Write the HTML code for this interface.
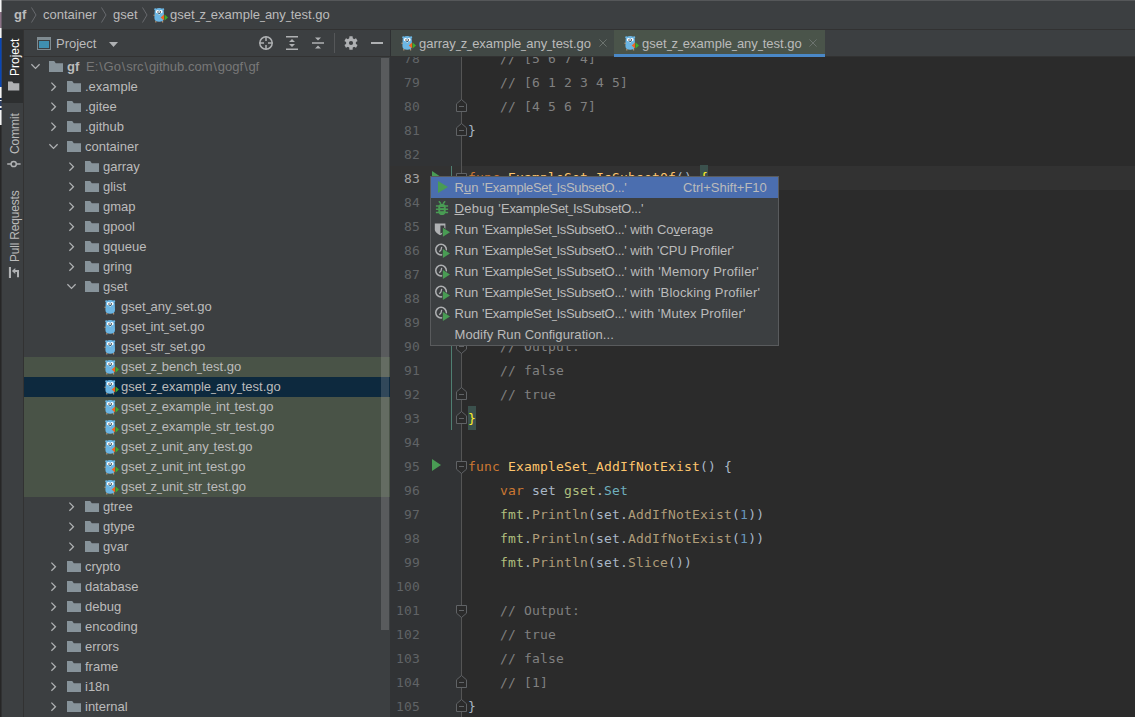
<!DOCTYPE html><html><head><meta charset="utf-8"><title>gf - gset_z_example_any_test.go</title><style>
*{box-sizing:border-box;margin:0;padding:0}
html,body{width:1135px;height:717px;overflow:hidden;background:#3c3f41}
body{position:relative;font-family:"Liberation Sans", sans-serif;font-size:12px;color:#bbbbbb;}
.abs{position:absolute}
.t{position:absolute;white-space:pre;line-height:20px;height:20px}
#edge{left:0;top:0;width:2px;height:717px;background:#3c3f41}
#topbar{left:2px;top:0;width:1133px;height:30px;background:#3c3f41;border-bottom:1px solid #323232}
#topline{left:2px;top:0;width:1133px;height:1px;background:#555759}
#stripe{left:2px;top:30px;width:22px;height:687px;background:#3c3f41;border-right:1px solid #323232}
#stripe .sel{left:0;top:0;width:21px;height:73px;background:#2d2f30}
.vt{position:absolute;white-space:pre;transform-origin:0 0;transform:rotate(-90deg);line-height:14px;height:14px;font-size:12px}
#proj{left:24px;top:30px;width:366px;height:687px;background:#3c3f41}
#projhead{left:0;top:0;width:366px;height:27px;border-bottom:1px solid #323232}
.row{position:absolute;left:0;width:366px;height:20px}
.row.g{background:#495347}
.row.s{background:#0d293e}
.row .t{top:0}
#sb{left:357px;top:28px;width:8px;height:572px;background:rgba(255,255,255,0.15)}
#tabs{left:390px;top:30px;width:745px;height:27px;background:#3c3f41;border-bottom:1px solid #323232;border-left:1px solid #2e3032}
.tab{position:absolute;top:0;height:26px;background:#414845}
.tab.act{background:#4a544a}
.tab.act:after{content:"";position:absolute;left:0;right:0;top:24px;height:3px;background:#4a88c7}
#ed{left:0;top:57px;width:1135px;height:660px;overflow:hidden}
#edin{left:0;top:-57px;width:1135px;height:717px}
#gutter{left:390px;top:57px;width:71px;height:660px;background:#313335}
#code{left:461px;top:57px;width:674px;height:660px;background:#2b2b2b}
.caret{position:absolute;left:390px;top:166px;width:745px;height:24px;background:#323232}
.ln{position:absolute;left:390px;width:30px;text-align:right;font-family:"DejaVu Sans Mono", "Liberation Mono", monospace;font-size:13px;letter-spacing:.174px;margin-top:1px;line-height:24px;height:24px;color:#606366;white-space:pre}
.cl{position:absolute;left:468px;font-family:"DejaVu Sans Mono", "Liberation Mono", monospace;font-size:13px;letter-spacing:.174px;margin-top:1px;line-height:24px;height:24px;color:#a9b7c6;white-space:pre}
.br{display:inline-block;height:24px;margin-top:-1px;vertical-align:top;line-height:26px;background:#3b514d;color:#ffef28}
.k{color:#cc7832}.f{color:#ffc66d}.c{color:#808080}.n{color:#6897bb}.p{color:#afbf7e}.m{color:#b09d79}.ty{color:#6fafbd}
#popup{left:430px;top:176px;width:349px;height:170px;background:#3c3f41;border:1px solid #595b5d}
.mi{position:absolute;left:0;width:347px;height:21px}
.mi.s{background:#4b6eaf}
.mi .t{top:0;line-height:21px;height:21px;left:23.5px}

.us{display:inline-block;width:4.9px;transform:scaleX(.68);transform-origin:0 50%}
.bs{display:inline-block;width:5.3px;text-align:center}
u{text-decoration:underline;text-underline-offset:1px}
</style></head><body>
<div id="edge" class="abs">
<div class="abs" style="left:0;top:0px;width:1px;height:12px;background:#f4f4f4"></div>
<div class="abs" style="left:1px;top:0px;width:1px;height:12px;background:#f4f4f4;opacity:.55"></div>
<div class="abs" style="left:0;top:12px;width:1px;height:16px;background:#8a7286"></div>
<div class="abs" style="left:1px;top:12px;width:1px;height:16px;background:#8a7286;opacity:.55"></div>
<div class="abs" style="left:0;top:28px;width:1px;height:10px;background:#f4f4f4"></div>
<div class="abs" style="left:1px;top:28px;width:1px;height:10px;background:#f4f4f4;opacity:.55"></div>
<div class="abs" style="left:0;top:38px;width:1px;height:49px;background:#0846b6"></div>
<div class="abs" style="left:1px;top:38px;width:1px;height:49px;background:#0846b6;opacity:.55"></div>
<div class="abs" style="left:0;top:87px;width:1px;height:11px;background:#f4f4f4"></div>
<div class="abs" style="left:1px;top:87px;width:1px;height:11px;background:#f4f4f4;opacity:.55"></div>
<div class="abs" style="left:0;top:98px;width:1px;height:2px;background:#1c2f55"></div>
<div class="abs" style="left:1px;top:98px;width:1px;height:2px;background:#1c2f55;opacity:.55"></div>
<div class="abs" style="left:0;top:100px;width:1px;height:1px;background:#f4f4f4"></div>
<div class="abs" style="left:1px;top:100px;width:1px;height:1px;background:#f4f4f4;opacity:.55"></div>
<div class="abs" style="left:0;top:101px;width:1px;height:5px;background:#2c3e63"></div>
<div class="abs" style="left:1px;top:101px;width:1px;height:5px;background:#2c3e63;opacity:.55"></div>
<div class="abs" style="left:0;top:106px;width:1px;height:2px;background:#f4f4f4"></div>
<div class="abs" style="left:1px;top:106px;width:1px;height:2px;background:#f4f4f4;opacity:.55"></div>
<div class="abs" style="left:0;top:108px;width:1px;height:2px;background:#1c2f55"></div>
<div class="abs" style="left:1px;top:108px;width:1px;height:2px;background:#1c2f55;opacity:.55"></div>
<div class="abs" style="left:0;top:110px;width:1px;height:15px;background:#f4f4f4"></div>
<div class="abs" style="left:1px;top:110px;width:1px;height:15px;background:#f4f4f4;opacity:.55"></div>
<div class="abs" style="left:0;top:125px;width:1px;height:592px;background:#262626"></div>
<div class="abs" style="left:1px;top:125px;width:1px;height:592px;background:#262626;opacity:.55"></div>
</div>
<div id="topbar" class="abs"></div><div id="topline" class="abs"></div>
<div class="t" style="left:14px;top:5px;font-weight:bold;font-size:13px">gf</div>
<svg class="abs" style="left:31px;top:7px" width="7" height="16" viewBox="0 0 7 16"><path d="M0.5 0.5 L5 8 L0.5 15.5" fill="none" stroke="#676a6d" stroke-width="1"/></svg>
<div class="t" style="left:43px;top:5px;font-size:13px">container</div>
<svg class="abs" style="left:101px;top:7px" width="7" height="16" viewBox="0 0 7 16"><path d="M0.5 0.5 L5 8 L0.5 15.5" fill="none" stroke="#676a6d" stroke-width="1"/></svg>
<div class="t" style="left:113px;top:5px;font-size:13px">gset</div>
<svg class="abs" style="left:141.5px;top:7px" width="7" height="16" viewBox="0 0 7 16"><path d="M0.5 0.5 L5 8 L0.5 15.5" fill="none" stroke="#676a6d" stroke-width="1"/></svg>
<div class="t" style="left:170px;top:5px;font-size:13px">gset<span class="us">_</span>z<span class="us">_</span>example<span class="us">_</span>any<span class="us">_</span>test.go</div>
<svg class="abs" style="left:153px;top:7px" width="16" height="16" viewBox="0 0 16 16"><circle cx="2.3" cy="2.3" r="1.15" fill="#6cb6e3"/><circle cx="10.1" cy="2.3" r="1.15" fill="#6cb6e3"/><path d="M1.6 5 C1.6 2 3.5 1 6.2 1 C8.9 1 10.8 2 10.8 5 L11 11 C11 13.8 9 14.8 6.2 14.8 C3.4 14.8 1.4 13.8 1.4 11 Z" fill="#6cb6e3"/><circle cx="4.5" cy="4.7" r="1.65" fill="#fff"/><circle cx="7.9" cy="4.7" r="1.65" fill="#fff"/><circle cx="5" cy="5" r="0.7" fill="#222"/><circle cx="7.4" cy="5" r="0.7" fill="#222"/><ellipse cx="6.2" cy="6.5" rx="0.9" ry="0.55" fill="#3a3a3a"/><rect x="5.7" y="6.9" width="1" height="0.9" fill="#f2ecdc"/><rect x="2.2" y="14.2" width="1.2" height="1.2" fill="#c9a27a"/><rect x="9" y="14.2" width="1.2" height="1.2" fill="#c9a27a"/><rect x="0.6" y="7.6" width="1" height="1.4" fill="#c9a27a"/><path d="M11.1 7.5 L11.1 13.4 L7.7 10.45 Z" fill="#f26522"/><path d="M11.6 7.5 L11.6 13.4 L15 10.45 Z" fill="#3fae2a"/></svg>
<div id="stripe" class="abs"><div class="sel abs"></div>
<div class="vt" style="left:6px;top:46px;color:#ffffff">Project</div>
<svg class="abs" style="left:6px;top:51px" width="12" height="10" viewBox="0 0 12 10"><path d="M0 0.5 H4.2 L5.6 2.3 H11.3 V9.5 H0 Z" fill="#afb1b3"/></svg>
<div class="vt" style="left:6px;top:124px;letter-spacing:-0.1px">Commit</div>
<svg class="abs" style="left:4px;top:129px" width="16" height="10" viewBox="0 0 16 10"><circle cx="7.7" cy="5" r="2.6" fill="none" stroke="#afb1b3" stroke-width="1.5"/><path d="M1.2 5 H5 M10.4 5 H14.6" stroke="#afb1b3" stroke-width="1.5"/></svg>
<div class="vt" style="left:6px;top:232px;letter-spacing:-0.2px">Pull Requests</div>
<svg class="abs" style="left:6px;top:236px" width="13" height="13" viewBox="0 0 13 13"><rect x="0.9" y="1" width="2.1" height="11" fill="#afb1b3"/><path d="M10 11.2 V5 H6" fill="none" stroke="#afb1b3" stroke-width="2"/><path d="M7.3 2 L3.9 5 L7.3 8 Z" fill="#afb1b3"/></svg>
</div>
<div id="proj" class="abs"><div id="projhead" class="abs">
<svg class="abs" style="left:13px;top:7px" width="14" height="14" viewBox="0 0 14 14"><rect x="0.5" y="0.5" width="13" height="12" fill="#3c3f41" stroke="#7f8b91"/><rect x="0" y="0" width="14" height="3" fill="#7f8b91"/><rect x="2" y="4" width="10" height="7" fill="#3f8fb0"/></svg>
<div class="t" style="left:32px;top:4px;font-size:13px">Project</div>
<svg class="abs" style="left:85px;top:12px" width="9" height="5" viewBox="0 0 9 5"><path d="M0 0 H9 L4.5 5 Z" fill="#afb1b3"/></svg>
<svg class="abs" style="left:234px;top:5px" width="16" height="16" viewBox="0 0 16 16"><circle cx="8" cy="8" r="6.2" fill="none" stroke="#afb1b3" stroke-width="1.5"/><path d="M8 1.5 V6 M8 10 V14.5 M1.5 8 H6 M10 8 H14.5" stroke="#afb1b3" stroke-width="1.5"/></svg>
<svg class="abs" style="left:260px;top:5px" width="16" height="16" viewBox="0 0 16 16"><path d="M2 1 H14 V2.6 H2 Z M2 13.4 H14 V15 H2 Z M8 4 L11 7 H5 Z M8 12 L11 9 H5 Z" fill="#afb1b3"/></svg>
<svg class="abs" style="left:286px;top:5px" width="16" height="16" viewBox="0 0 16 16"><path d="M2 7.2 H14 V8.8 H2 Z M8 5.6 L11 2.6 H5 Z M8 10.4 L11 13.4 H5 Z" fill="#afb1b3"/></svg>
<div class="abs" style="left:310px;top:3px;width:1px;height:20px;background:#555759"></div>
<svg class="abs" style="left:319px;top:5px" width="16" height="16" viewBox="0 0 16 16"><g fill="#afb1b3"><circle cx="8" cy="8" r="4.9"/><rect x="6.3" y="1.3" width="3.4" height="3.4" rx="0.5" transform="rotate(0 8 8)"/><rect x="6.3" y="1.3" width="3.4" height="3.4" rx="0.5" transform="rotate(60 8 8)"/><rect x="6.3" y="1.3" width="3.4" height="3.4" rx="0.5" transform="rotate(120 8 8)"/><rect x="6.3" y="1.3" width="3.4" height="3.4" rx="0.5" transform="rotate(180 8 8)"/><rect x="6.3" y="1.3" width="3.4" height="3.4" rx="0.5" transform="rotate(240 8 8)"/><rect x="6.3" y="1.3" width="3.4" height="3.4" rx="0.5" transform="rotate(300 8 8)"/></g><circle cx="8" cy="8" r="2.1" fill="#3c3f41"/></svg>
<div class="abs" style="left:347px;top:12px;width:12px;height:2px;background:#afb1b3"></div>
</div>
<div class="row " style="top:27px">
<svg class="abs" style="left:6px;top:4px" width="11" height="11" viewBox="0 0 11 11"><path d="M1.4 3.2 L5.5 7.4 L9.6 3.2" fill="none" stroke="#afb1b3" stroke-width="1.25"/></svg>
<svg class="abs" style="left:24px;top:3px" width="16" height="14" viewBox="0 0 16 14"><path d="M1 1 H6.2 L7.8 3.2 H15 V12 H1 Z" fill="#87939a"/></svg>
<div class="t" style="left:43px;font-weight:bold;font-size:13px">gf</div><div class="t" style="left:62px;color:#787878;font-size:13px">E:<span class="bs">\</span>Go<span class="bs">\</span>src<span class="bs">\</span>github.com<span class="bs">\</span>gogf<span class="bs">\</span>gf</div>
</div>
<div class="row " style="top:47px">
<svg class="abs" style="left:24px;top:4px" width="11" height="11" viewBox="0 0 11 11"><path d="M3.4 1.6 L7.5 5.7 L3.4 9.8" fill="none" stroke="#afb1b3" stroke-width="1.25"/></svg>
<svg class="abs" style="left:42px;top:3px" width="16" height="14" viewBox="0 0 16 14"><path d="M1 1 H6.2 L7.8 3.2 H15 V12 H1 Z" fill="#87939a"/></svg>
<div class="t" style="left:61px;font-size:13px">.example</div>
</div>
<div class="row " style="top:67px">
<svg class="abs" style="left:24px;top:4px" width="11" height="11" viewBox="0 0 11 11"><path d="M3.4 1.6 L7.5 5.7 L3.4 9.8" fill="none" stroke="#afb1b3" stroke-width="1.25"/></svg>
<svg class="abs" style="left:42px;top:3px" width="16" height="14" viewBox="0 0 16 14"><path d="M1 1 H6.2 L7.8 3.2 H15 V12 H1 Z" fill="#87939a"/></svg>
<div class="t" style="left:61px;font-size:13px">.gitee</div>
</div>
<div class="row " style="top:87px">
<svg class="abs" style="left:24px;top:4px" width="11" height="11" viewBox="0 0 11 11"><path d="M3.4 1.6 L7.5 5.7 L3.4 9.8" fill="none" stroke="#afb1b3" stroke-width="1.25"/></svg>
<svg class="abs" style="left:42px;top:3px" width="16" height="14" viewBox="0 0 16 14"><path d="M1 1 H6.2 L7.8 3.2 H15 V12 H1 Z" fill="#87939a"/></svg>
<div class="t" style="left:61px;font-size:13px">.github</div>
</div>
<div class="row " style="top:107px">
<svg class="abs" style="left:24px;top:4px" width="11" height="11" viewBox="0 0 11 11"><path d="M1.4 3.2 L5.5 7.4 L9.6 3.2" fill="none" stroke="#afb1b3" stroke-width="1.25"/></svg>
<svg class="abs" style="left:42px;top:3px" width="16" height="14" viewBox="0 0 16 14"><path d="M1 1 H6.2 L7.8 3.2 H15 V12 H1 Z" fill="#87939a"/></svg>
<div class="t" style="left:61px;font-size:13px">container</div>
</div>
<div class="row " style="top:127px">
<svg class="abs" style="left:42px;top:4px" width="11" height="11" viewBox="0 0 11 11"><path d="M3.4 1.6 L7.5 5.7 L3.4 9.8" fill="none" stroke="#afb1b3" stroke-width="1.25"/></svg>
<svg class="abs" style="left:60px;top:3px" width="16" height="14" viewBox="0 0 16 14"><path d="M1 1 H6.2 L7.8 3.2 H15 V12 H1 Z" fill="#87939a"/></svg>
<div class="t" style="left:79px;font-size:13px">garray</div>
</div>
<div class="row " style="top:147px">
<svg class="abs" style="left:42px;top:4px" width="11" height="11" viewBox="0 0 11 11"><path d="M3.4 1.6 L7.5 5.7 L3.4 9.8" fill="none" stroke="#afb1b3" stroke-width="1.25"/></svg>
<svg class="abs" style="left:60px;top:3px" width="16" height="14" viewBox="0 0 16 14"><path d="M1 1 H6.2 L7.8 3.2 H15 V12 H1 Z" fill="#87939a"/></svg>
<div class="t" style="left:79px;font-size:13px">glist</div>
</div>
<div class="row " style="top:167px">
<svg class="abs" style="left:42px;top:4px" width="11" height="11" viewBox="0 0 11 11"><path d="M3.4 1.6 L7.5 5.7 L3.4 9.8" fill="none" stroke="#afb1b3" stroke-width="1.25"/></svg>
<svg class="abs" style="left:60px;top:3px" width="16" height="14" viewBox="0 0 16 14"><path d="M1 1 H6.2 L7.8 3.2 H15 V12 H1 Z" fill="#87939a"/></svg>
<div class="t" style="left:79px;font-size:13px">gmap</div>
</div>
<div class="row " style="top:187px">
<svg class="abs" style="left:42px;top:4px" width="11" height="11" viewBox="0 0 11 11"><path d="M3.4 1.6 L7.5 5.7 L3.4 9.8" fill="none" stroke="#afb1b3" stroke-width="1.25"/></svg>
<svg class="abs" style="left:60px;top:3px" width="16" height="14" viewBox="0 0 16 14"><path d="M1 1 H6.2 L7.8 3.2 H15 V12 H1 Z" fill="#87939a"/></svg>
<div class="t" style="left:79px;font-size:13px">gpool</div>
</div>
<div class="row " style="top:207px">
<svg class="abs" style="left:42px;top:4px" width="11" height="11" viewBox="0 0 11 11"><path d="M3.4 1.6 L7.5 5.7 L3.4 9.8" fill="none" stroke="#afb1b3" stroke-width="1.25"/></svg>
<svg class="abs" style="left:60px;top:3px" width="16" height="14" viewBox="0 0 16 14"><path d="M1 1 H6.2 L7.8 3.2 H15 V12 H1 Z" fill="#87939a"/></svg>
<div class="t" style="left:79px;font-size:13px">gqueue</div>
</div>
<div class="row " style="top:227px">
<svg class="abs" style="left:42px;top:4px" width="11" height="11" viewBox="0 0 11 11"><path d="M3.4 1.6 L7.5 5.7 L3.4 9.8" fill="none" stroke="#afb1b3" stroke-width="1.25"/></svg>
<svg class="abs" style="left:60px;top:3px" width="16" height="14" viewBox="0 0 16 14"><path d="M1 1 H6.2 L7.8 3.2 H15 V12 H1 Z" fill="#87939a"/></svg>
<div class="t" style="left:79px;font-size:13px">gring</div>
</div>
<div class="row " style="top:247px">
<svg class="abs" style="left:42px;top:4px" width="11" height="11" viewBox="0 0 11 11"><path d="M1.4 3.2 L5.5 7.4 L9.6 3.2" fill="none" stroke="#afb1b3" stroke-width="1.25"/></svg>
<svg class="abs" style="left:60px;top:3px" width="16" height="14" viewBox="0 0 16 14"><path d="M1 1 H6.2 L7.8 3.2 H15 V12 H1 Z" fill="#87939a"/></svg>
<div class="t" style="left:79px;font-size:13px">gset</div>
</div>
<div class="row " style="top:267px">
<svg class="abs" style="left:80px;top:2px" width="16" height="16" viewBox="0 0 16 16"><circle cx="2.3" cy="2.3" r="1.15" fill="#6cb6e3"/><circle cx="10.1" cy="2.3" r="1.15" fill="#6cb6e3"/><path d="M1.6 5 C1.6 2 3.5 1 6.2 1 C8.9 1 10.8 2 10.8 5 L11 11 C11 13.8 9 14.8 6.2 14.8 C3.4 14.8 1.4 13.8 1.4 11 Z" fill="#6cb6e3"/><circle cx="4.5" cy="4.7" r="1.65" fill="#fff"/><circle cx="7.9" cy="4.7" r="1.65" fill="#fff"/><circle cx="5" cy="5" r="0.7" fill="#222"/><circle cx="7.4" cy="5" r="0.7" fill="#222"/><ellipse cx="6.2" cy="6.5" rx="0.9" ry="0.55" fill="#3a3a3a"/><rect x="5.7" y="6.9" width="1" height="0.9" fill="#f2ecdc"/><rect x="2.2" y="14.2" width="1.2" height="1.2" fill="#c9a27a"/><rect x="9" y="14.2" width="1.2" height="1.2" fill="#c9a27a"/><rect x="0.6" y="7.6" width="1" height="1.4" fill="#c9a27a"/></svg>
<div class="t" style="left:97px;font-size:13px">gset<span class="us">_</span>any<span class="us">_</span>set.go</div>
</div>
<div class="row " style="top:287px">
<svg class="abs" style="left:80px;top:2px" width="16" height="16" viewBox="0 0 16 16"><circle cx="2.3" cy="2.3" r="1.15" fill="#6cb6e3"/><circle cx="10.1" cy="2.3" r="1.15" fill="#6cb6e3"/><path d="M1.6 5 C1.6 2 3.5 1 6.2 1 C8.9 1 10.8 2 10.8 5 L11 11 C11 13.8 9 14.8 6.2 14.8 C3.4 14.8 1.4 13.8 1.4 11 Z" fill="#6cb6e3"/><circle cx="4.5" cy="4.7" r="1.65" fill="#fff"/><circle cx="7.9" cy="4.7" r="1.65" fill="#fff"/><circle cx="5" cy="5" r="0.7" fill="#222"/><circle cx="7.4" cy="5" r="0.7" fill="#222"/><ellipse cx="6.2" cy="6.5" rx="0.9" ry="0.55" fill="#3a3a3a"/><rect x="5.7" y="6.9" width="1" height="0.9" fill="#f2ecdc"/><rect x="2.2" y="14.2" width="1.2" height="1.2" fill="#c9a27a"/><rect x="9" y="14.2" width="1.2" height="1.2" fill="#c9a27a"/><rect x="0.6" y="7.6" width="1" height="1.4" fill="#c9a27a"/></svg>
<div class="t" style="left:97px;font-size:13px">gset<span class="us">_</span>int<span class="us">_</span>set.go</div>
</div>
<div class="row " style="top:307px">
<svg class="abs" style="left:80px;top:2px" width="16" height="16" viewBox="0 0 16 16"><circle cx="2.3" cy="2.3" r="1.15" fill="#6cb6e3"/><circle cx="10.1" cy="2.3" r="1.15" fill="#6cb6e3"/><path d="M1.6 5 C1.6 2 3.5 1 6.2 1 C8.9 1 10.8 2 10.8 5 L11 11 C11 13.8 9 14.8 6.2 14.8 C3.4 14.8 1.4 13.8 1.4 11 Z" fill="#6cb6e3"/><circle cx="4.5" cy="4.7" r="1.65" fill="#fff"/><circle cx="7.9" cy="4.7" r="1.65" fill="#fff"/><circle cx="5" cy="5" r="0.7" fill="#222"/><circle cx="7.4" cy="5" r="0.7" fill="#222"/><ellipse cx="6.2" cy="6.5" rx="0.9" ry="0.55" fill="#3a3a3a"/><rect x="5.7" y="6.9" width="1" height="0.9" fill="#f2ecdc"/><rect x="2.2" y="14.2" width="1.2" height="1.2" fill="#c9a27a"/><rect x="9" y="14.2" width="1.2" height="1.2" fill="#c9a27a"/><rect x="0.6" y="7.6" width="1" height="1.4" fill="#c9a27a"/></svg>
<div class="t" style="left:97px;font-size:13px">gset<span class="us">_</span>str<span class="us">_</span>set.go</div>
</div>
<div class="row g" style="top:327px">
<svg class="abs" style="left:80px;top:2px" width="16" height="16" viewBox="0 0 16 16"><circle cx="2.3" cy="2.3" r="1.15" fill="#6cb6e3"/><circle cx="10.1" cy="2.3" r="1.15" fill="#6cb6e3"/><path d="M1.6 5 C1.6 2 3.5 1 6.2 1 C8.9 1 10.8 2 10.8 5 L11 11 C11 13.8 9 14.8 6.2 14.8 C3.4 14.8 1.4 13.8 1.4 11 Z" fill="#6cb6e3"/><circle cx="4.5" cy="4.7" r="1.65" fill="#fff"/><circle cx="7.9" cy="4.7" r="1.65" fill="#fff"/><circle cx="5" cy="5" r="0.7" fill="#222"/><circle cx="7.4" cy="5" r="0.7" fill="#222"/><ellipse cx="6.2" cy="6.5" rx="0.9" ry="0.55" fill="#3a3a3a"/><rect x="5.7" y="6.9" width="1" height="0.9" fill="#f2ecdc"/><rect x="2.2" y="14.2" width="1.2" height="1.2" fill="#c9a27a"/><rect x="9" y="14.2" width="1.2" height="1.2" fill="#c9a27a"/><rect x="0.6" y="7.6" width="1" height="1.4" fill="#c9a27a"/><path d="M11.1 7.5 L11.1 13.4 L7.7 10.45 Z" fill="#f26522"/><path d="M11.6 7.5 L11.6 13.4 L15 10.45 Z" fill="#3fae2a"/></svg>
<div class="t" style="left:97px;font-size:13px">gset<span class="us">_</span>z<span class="us">_</span>bench<span class="us">_</span>test.go</div>
</div>
<div class="row s" style="top:347px">
<svg class="abs" style="left:80px;top:2px" width="16" height="16" viewBox="0 0 16 16"><circle cx="2.3" cy="2.3" r="1.15" fill="#6cb6e3"/><circle cx="10.1" cy="2.3" r="1.15" fill="#6cb6e3"/><path d="M1.6 5 C1.6 2 3.5 1 6.2 1 C8.9 1 10.8 2 10.8 5 L11 11 C11 13.8 9 14.8 6.2 14.8 C3.4 14.8 1.4 13.8 1.4 11 Z" fill="#6cb6e3"/><circle cx="4.5" cy="4.7" r="1.65" fill="#fff"/><circle cx="7.9" cy="4.7" r="1.65" fill="#fff"/><circle cx="5" cy="5" r="0.7" fill="#222"/><circle cx="7.4" cy="5" r="0.7" fill="#222"/><ellipse cx="6.2" cy="6.5" rx="0.9" ry="0.55" fill="#3a3a3a"/><rect x="5.7" y="6.9" width="1" height="0.9" fill="#f2ecdc"/><rect x="2.2" y="14.2" width="1.2" height="1.2" fill="#c9a27a"/><rect x="9" y="14.2" width="1.2" height="1.2" fill="#c9a27a"/><rect x="0.6" y="7.6" width="1" height="1.4" fill="#c9a27a"/><path d="M11.1 7.5 L11.1 13.4 L7.7 10.45 Z" fill="#f26522"/><path d="M11.6 7.5 L11.6 13.4 L15 10.45 Z" fill="#3fae2a"/></svg>
<div class="t" style="left:97px;font-size:13px">gset<span class="us">_</span>z<span class="us">_</span>example<span class="us">_</span>any<span class="us">_</span>test.go</div>
</div>
<div class="row g" style="top:367px">
<svg class="abs" style="left:80px;top:2px" width="16" height="16" viewBox="0 0 16 16"><circle cx="2.3" cy="2.3" r="1.15" fill="#6cb6e3"/><circle cx="10.1" cy="2.3" r="1.15" fill="#6cb6e3"/><path d="M1.6 5 C1.6 2 3.5 1 6.2 1 C8.9 1 10.8 2 10.8 5 L11 11 C11 13.8 9 14.8 6.2 14.8 C3.4 14.8 1.4 13.8 1.4 11 Z" fill="#6cb6e3"/><circle cx="4.5" cy="4.7" r="1.65" fill="#fff"/><circle cx="7.9" cy="4.7" r="1.65" fill="#fff"/><circle cx="5" cy="5" r="0.7" fill="#222"/><circle cx="7.4" cy="5" r="0.7" fill="#222"/><ellipse cx="6.2" cy="6.5" rx="0.9" ry="0.55" fill="#3a3a3a"/><rect x="5.7" y="6.9" width="1" height="0.9" fill="#f2ecdc"/><rect x="2.2" y="14.2" width="1.2" height="1.2" fill="#c9a27a"/><rect x="9" y="14.2" width="1.2" height="1.2" fill="#c9a27a"/><rect x="0.6" y="7.6" width="1" height="1.4" fill="#c9a27a"/><path d="M11.1 7.5 L11.1 13.4 L7.7 10.45 Z" fill="#f26522"/><path d="M11.6 7.5 L11.6 13.4 L15 10.45 Z" fill="#3fae2a"/></svg>
<div class="t" style="left:97px;font-size:13px">gset<span class="us">_</span>z<span class="us">_</span>example<span class="us">_</span>int<span class="us">_</span>test.go</div>
</div>
<div class="row g" style="top:387px">
<svg class="abs" style="left:80px;top:2px" width="16" height="16" viewBox="0 0 16 16"><circle cx="2.3" cy="2.3" r="1.15" fill="#6cb6e3"/><circle cx="10.1" cy="2.3" r="1.15" fill="#6cb6e3"/><path d="M1.6 5 C1.6 2 3.5 1 6.2 1 C8.9 1 10.8 2 10.8 5 L11 11 C11 13.8 9 14.8 6.2 14.8 C3.4 14.8 1.4 13.8 1.4 11 Z" fill="#6cb6e3"/><circle cx="4.5" cy="4.7" r="1.65" fill="#fff"/><circle cx="7.9" cy="4.7" r="1.65" fill="#fff"/><circle cx="5" cy="5" r="0.7" fill="#222"/><circle cx="7.4" cy="5" r="0.7" fill="#222"/><ellipse cx="6.2" cy="6.5" rx="0.9" ry="0.55" fill="#3a3a3a"/><rect x="5.7" y="6.9" width="1" height="0.9" fill="#f2ecdc"/><rect x="2.2" y="14.2" width="1.2" height="1.2" fill="#c9a27a"/><rect x="9" y="14.2" width="1.2" height="1.2" fill="#c9a27a"/><rect x="0.6" y="7.6" width="1" height="1.4" fill="#c9a27a"/><path d="M11.1 7.5 L11.1 13.4 L7.7 10.45 Z" fill="#f26522"/><path d="M11.6 7.5 L11.6 13.4 L15 10.45 Z" fill="#3fae2a"/></svg>
<div class="t" style="left:97px;font-size:13px">gset<span class="us">_</span>z<span class="us">_</span>example<span class="us">_</span>str<span class="us">_</span>test.go</div>
</div>
<div class="row g" style="top:407px">
<svg class="abs" style="left:80px;top:2px" width="16" height="16" viewBox="0 0 16 16"><circle cx="2.3" cy="2.3" r="1.15" fill="#6cb6e3"/><circle cx="10.1" cy="2.3" r="1.15" fill="#6cb6e3"/><path d="M1.6 5 C1.6 2 3.5 1 6.2 1 C8.9 1 10.8 2 10.8 5 L11 11 C11 13.8 9 14.8 6.2 14.8 C3.4 14.8 1.4 13.8 1.4 11 Z" fill="#6cb6e3"/><circle cx="4.5" cy="4.7" r="1.65" fill="#fff"/><circle cx="7.9" cy="4.7" r="1.65" fill="#fff"/><circle cx="5" cy="5" r="0.7" fill="#222"/><circle cx="7.4" cy="5" r="0.7" fill="#222"/><ellipse cx="6.2" cy="6.5" rx="0.9" ry="0.55" fill="#3a3a3a"/><rect x="5.7" y="6.9" width="1" height="0.9" fill="#f2ecdc"/><rect x="2.2" y="14.2" width="1.2" height="1.2" fill="#c9a27a"/><rect x="9" y="14.2" width="1.2" height="1.2" fill="#c9a27a"/><rect x="0.6" y="7.6" width="1" height="1.4" fill="#c9a27a"/><path d="M11.1 7.5 L11.1 13.4 L7.7 10.45 Z" fill="#f26522"/><path d="M11.6 7.5 L11.6 13.4 L15 10.45 Z" fill="#3fae2a"/></svg>
<div class="t" style="left:97px;font-size:13px">gset<span class="us">_</span>z<span class="us">_</span>unit<span class="us">_</span>any<span class="us">_</span>test.go</div>
</div>
<div class="row g" style="top:427px">
<svg class="abs" style="left:80px;top:2px" width="16" height="16" viewBox="0 0 16 16"><circle cx="2.3" cy="2.3" r="1.15" fill="#6cb6e3"/><circle cx="10.1" cy="2.3" r="1.15" fill="#6cb6e3"/><path d="M1.6 5 C1.6 2 3.5 1 6.2 1 C8.9 1 10.8 2 10.8 5 L11 11 C11 13.8 9 14.8 6.2 14.8 C3.4 14.8 1.4 13.8 1.4 11 Z" fill="#6cb6e3"/><circle cx="4.5" cy="4.7" r="1.65" fill="#fff"/><circle cx="7.9" cy="4.7" r="1.65" fill="#fff"/><circle cx="5" cy="5" r="0.7" fill="#222"/><circle cx="7.4" cy="5" r="0.7" fill="#222"/><ellipse cx="6.2" cy="6.5" rx="0.9" ry="0.55" fill="#3a3a3a"/><rect x="5.7" y="6.9" width="1" height="0.9" fill="#f2ecdc"/><rect x="2.2" y="14.2" width="1.2" height="1.2" fill="#c9a27a"/><rect x="9" y="14.2" width="1.2" height="1.2" fill="#c9a27a"/><rect x="0.6" y="7.6" width="1" height="1.4" fill="#c9a27a"/><path d="M11.1 7.5 L11.1 13.4 L7.7 10.45 Z" fill="#f26522"/><path d="M11.6 7.5 L11.6 13.4 L15 10.45 Z" fill="#3fae2a"/></svg>
<div class="t" style="left:97px;font-size:13px">gset<span class="us">_</span>z<span class="us">_</span>unit<span class="us">_</span>int<span class="us">_</span>test.go</div>
</div>
<div class="row g" style="top:447px">
<svg class="abs" style="left:80px;top:2px" width="16" height="16" viewBox="0 0 16 16"><circle cx="2.3" cy="2.3" r="1.15" fill="#6cb6e3"/><circle cx="10.1" cy="2.3" r="1.15" fill="#6cb6e3"/><path d="M1.6 5 C1.6 2 3.5 1 6.2 1 C8.9 1 10.8 2 10.8 5 L11 11 C11 13.8 9 14.8 6.2 14.8 C3.4 14.8 1.4 13.8 1.4 11 Z" fill="#6cb6e3"/><circle cx="4.5" cy="4.7" r="1.65" fill="#fff"/><circle cx="7.9" cy="4.7" r="1.65" fill="#fff"/><circle cx="5" cy="5" r="0.7" fill="#222"/><circle cx="7.4" cy="5" r="0.7" fill="#222"/><ellipse cx="6.2" cy="6.5" rx="0.9" ry="0.55" fill="#3a3a3a"/><rect x="5.7" y="6.9" width="1" height="0.9" fill="#f2ecdc"/><rect x="2.2" y="14.2" width="1.2" height="1.2" fill="#c9a27a"/><rect x="9" y="14.2" width="1.2" height="1.2" fill="#c9a27a"/><rect x="0.6" y="7.6" width="1" height="1.4" fill="#c9a27a"/><path d="M11.1 7.5 L11.1 13.4 L7.7 10.45 Z" fill="#f26522"/><path d="M11.6 7.5 L11.6 13.4 L15 10.45 Z" fill="#3fae2a"/></svg>
<div class="t" style="left:97px;font-size:13px">gset<span class="us">_</span>z<span class="us">_</span>unit<span class="us">_</span>str<span class="us">_</span>test.go</div>
</div>
<div class="row " style="top:467px">
<svg class="abs" style="left:42px;top:4px" width="11" height="11" viewBox="0 0 11 11"><path d="M3.4 1.6 L7.5 5.7 L3.4 9.8" fill="none" stroke="#afb1b3" stroke-width="1.25"/></svg>
<svg class="abs" style="left:60px;top:3px" width="16" height="14" viewBox="0 0 16 14"><path d="M1 1 H6.2 L7.8 3.2 H15 V12 H1 Z" fill="#87939a"/></svg>
<div class="t" style="left:79px;font-size:13px">gtree</div>
</div>
<div class="row " style="top:487px">
<svg class="abs" style="left:42px;top:4px" width="11" height="11" viewBox="0 0 11 11"><path d="M3.4 1.6 L7.5 5.7 L3.4 9.8" fill="none" stroke="#afb1b3" stroke-width="1.25"/></svg>
<svg class="abs" style="left:60px;top:3px" width="16" height="14" viewBox="0 0 16 14"><path d="M1 1 H6.2 L7.8 3.2 H15 V12 H1 Z" fill="#87939a"/></svg>
<div class="t" style="left:79px;font-size:13px">gtype</div>
</div>
<div class="row " style="top:507px">
<svg class="abs" style="left:42px;top:4px" width="11" height="11" viewBox="0 0 11 11"><path d="M3.4 1.6 L7.5 5.7 L3.4 9.8" fill="none" stroke="#afb1b3" stroke-width="1.25"/></svg>
<svg class="abs" style="left:60px;top:3px" width="16" height="14" viewBox="0 0 16 14"><path d="M1 1 H6.2 L7.8 3.2 H15 V12 H1 Z" fill="#87939a"/></svg>
<div class="t" style="left:79px;font-size:13px">gvar</div>
</div>
<div class="row " style="top:527px">
<svg class="abs" style="left:24px;top:4px" width="11" height="11" viewBox="0 0 11 11"><path d="M3.4 1.6 L7.5 5.7 L3.4 9.8" fill="none" stroke="#afb1b3" stroke-width="1.25"/></svg>
<svg class="abs" style="left:42px;top:3px" width="16" height="14" viewBox="0 0 16 14"><path d="M1 1 H6.2 L7.8 3.2 H15 V12 H1 Z" fill="#87939a"/></svg>
<div class="t" style="left:61px;font-size:13px">crypto</div>
</div>
<div class="row " style="top:547px">
<svg class="abs" style="left:24px;top:4px" width="11" height="11" viewBox="0 0 11 11"><path d="M3.4 1.6 L7.5 5.7 L3.4 9.8" fill="none" stroke="#afb1b3" stroke-width="1.25"/></svg>
<svg class="abs" style="left:42px;top:3px" width="16" height="14" viewBox="0 0 16 14"><path d="M1 1 H6.2 L7.8 3.2 H15 V12 H1 Z" fill="#87939a"/></svg>
<div class="t" style="left:61px;font-size:13px">database</div>
</div>
<div class="row " style="top:567px">
<svg class="abs" style="left:24px;top:4px" width="11" height="11" viewBox="0 0 11 11"><path d="M3.4 1.6 L7.5 5.7 L3.4 9.8" fill="none" stroke="#afb1b3" stroke-width="1.25"/></svg>
<svg class="abs" style="left:42px;top:3px" width="16" height="14" viewBox="0 0 16 14"><path d="M1 1 H6.2 L7.8 3.2 H15 V12 H1 Z" fill="#87939a"/></svg>
<div class="t" style="left:61px;font-size:13px">debug</div>
</div>
<div class="row " style="top:587px">
<svg class="abs" style="left:24px;top:4px" width="11" height="11" viewBox="0 0 11 11"><path d="M3.4 1.6 L7.5 5.7 L3.4 9.8" fill="none" stroke="#afb1b3" stroke-width="1.25"/></svg>
<svg class="abs" style="left:42px;top:3px" width="16" height="14" viewBox="0 0 16 14"><path d="M1 1 H6.2 L7.8 3.2 H15 V12 H1 Z" fill="#87939a"/></svg>
<div class="t" style="left:61px;font-size:13px">encoding</div>
</div>
<div class="row " style="top:607px">
<svg class="abs" style="left:24px;top:4px" width="11" height="11" viewBox="0 0 11 11"><path d="M3.4 1.6 L7.5 5.7 L3.4 9.8" fill="none" stroke="#afb1b3" stroke-width="1.25"/></svg>
<svg class="abs" style="left:42px;top:3px" width="16" height="14" viewBox="0 0 16 14"><path d="M1 1 H6.2 L7.8 3.2 H15 V12 H1 Z" fill="#87939a"/></svg>
<div class="t" style="left:61px;font-size:13px">errors</div>
</div>
<div class="row " style="top:627px">
<svg class="abs" style="left:24px;top:4px" width="11" height="11" viewBox="0 0 11 11"><path d="M3.4 1.6 L7.5 5.7 L3.4 9.8" fill="none" stroke="#afb1b3" stroke-width="1.25"/></svg>
<svg class="abs" style="left:42px;top:3px" width="16" height="14" viewBox="0 0 16 14"><path d="M1 1 H6.2 L7.8 3.2 H15 V12 H1 Z" fill="#87939a"/></svg>
<div class="t" style="left:61px;font-size:13px">frame</div>
</div>
<div class="row " style="top:647px">
<svg class="abs" style="left:24px;top:4px" width="11" height="11" viewBox="0 0 11 11"><path d="M3.4 1.6 L7.5 5.7 L3.4 9.8" fill="none" stroke="#afb1b3" stroke-width="1.25"/></svg>
<svg class="abs" style="left:42px;top:3px" width="16" height="14" viewBox="0 0 16 14"><path d="M1 1 H6.2 L7.8 3.2 H15 V12 H1 Z" fill="#87939a"/></svg>
<div class="t" style="left:61px;font-size:13px">i18n</div>
</div>
<div class="row " style="top:667px">
<svg class="abs" style="left:24px;top:4px" width="11" height="11" viewBox="0 0 11 11"><path d="M3.4 1.6 L7.5 5.7 L3.4 9.8" fill="none" stroke="#afb1b3" stroke-width="1.25"/></svg>
<svg class="abs" style="left:42px;top:3px" width="16" height="14" viewBox="0 0 16 14"><path d="M1 1 H6.2 L7.8 3.2 H15 V12 H1 Z" fill="#87939a"/></svg>
<div class="t" style="left:61px;font-size:13px">internal</div>
</div>
<div id="sb" class="abs"></div>
</div>
<div id="tabs" class="abs">
<div class="tab" style="left:0;width:223px"><svg class="abs" style="left:10px;top:5px" width="16" height="16" viewBox="0 0 16 16"><circle cx="2.3" cy="2.3" r="1.15" fill="#6cb6e3"/><circle cx="10.1" cy="2.3" r="1.15" fill="#6cb6e3"/><path d="M1.6 5 C1.6 2 3.5 1 6.2 1 C8.9 1 10.8 2 10.8 5 L11 11 C11 13.8 9 14.8 6.2 14.8 C3.4 14.8 1.4 13.8 1.4 11 Z" fill="#6cb6e3"/><circle cx="4.5" cy="4.7" r="1.65" fill="#fff"/><circle cx="7.9" cy="4.7" r="1.65" fill="#fff"/><circle cx="5" cy="5" r="0.7" fill="#222"/><circle cx="7.4" cy="5" r="0.7" fill="#222"/><ellipse cx="6.2" cy="6.5" rx="0.9" ry="0.55" fill="#3a3a3a"/><rect x="5.7" y="6.9" width="1" height="0.9" fill="#f2ecdc"/><rect x="2.2" y="14.2" width="1.2" height="1.2" fill="#c9a27a"/><rect x="9" y="14.2" width="1.2" height="1.2" fill="#c9a27a"/><rect x="0.6" y="7.6" width="1" height="1.4" fill="#c9a27a"/><path d="M11.1 7.5 L11.1 13.4 L7.7 10.45 Z" fill="#f26522"/><path d="M11.6 7.5 L11.6 13.4 L15 10.45 Z" fill="#3fae2a"/></svg><div class="t" style="left:28px;top:4px;font-size:13px">garray<span class="us">_</span>z<span class="us">_</span>example<span class="us">_</span>any<span class="us">_</span>test.go</div><svg class="abs" style="left:207.9px;top:9px" width="8" height="8" viewBox="0 0 8 8"><path d="M0.4 0.4 L7.6 7.6 M7.6 0.4 L0.4 7.6" stroke="#6c736f" stroke-width="1"/></svg></div>
<div class="tab act" style="left:223px;width:211px"><svg class="abs" style="left:10px;top:5px" width="16" height="16" viewBox="0 0 16 16"><circle cx="2.3" cy="2.3" r="1.15" fill="#6cb6e3"/><circle cx="10.1" cy="2.3" r="1.15" fill="#6cb6e3"/><path d="M1.6 5 C1.6 2 3.5 1 6.2 1 C8.9 1 10.8 2 10.8 5 L11 11 C11 13.8 9 14.8 6.2 14.8 C3.4 14.8 1.4 13.8 1.4 11 Z" fill="#6cb6e3"/><circle cx="4.5" cy="4.7" r="1.65" fill="#fff"/><circle cx="7.9" cy="4.7" r="1.65" fill="#fff"/><circle cx="5" cy="5" r="0.7" fill="#222"/><circle cx="7.4" cy="5" r="0.7" fill="#222"/><ellipse cx="6.2" cy="6.5" rx="0.9" ry="0.55" fill="#3a3a3a"/><rect x="5.7" y="6.9" width="1" height="0.9" fill="#f2ecdc"/><rect x="2.2" y="14.2" width="1.2" height="1.2" fill="#c9a27a"/><rect x="9" y="14.2" width="1.2" height="1.2" fill="#c9a27a"/><rect x="0.6" y="7.6" width="1" height="1.4" fill="#c9a27a"/><path d="M11.1 7.5 L11.1 13.4 L7.7 10.45 Z" fill="#f26522"/><path d="M11.6 7.5 L11.6 13.4 L15 10.45 Z" fill="#3fae2a"/></svg><div class="t" style="left:28px;top:4px;font-size:13px">gset<span class="us">_</span>z<span class="us">_</span>example<span class="us">_</span>any<span class="us">_</span>test.go</div><svg class="abs" style="left:194.7px;top:9px" width="8" height="8" viewBox="0 0 8 8"><path d="M0.4 0.4 L7.6 7.6 M7.6 0.4 L0.4 7.6" stroke="#6c736f" stroke-width="1"/></svg></div>
</div>
<div id="ed" class="abs"><div id="edin" class="abs">
<div id="gutter" class="abs"></div><div id="code" class="abs"></div><div class="caret"></div>
<div class="ln" style="top:46px">78</div>
<div class="cl" style="top:46px">    <span class="c">// [5 6 7 4]</span></div>
<div class="ln" style="top:70px">79</div>
<div class="cl" style="top:70px">    <span class="c">// [6 1 2 3 4 5]</span></div>
<div class="ln" style="top:94px">80</div>
<div class="cl" style="top:94px">    <span class="c">// [4 5 6 7]</span></div>
<div class="ln" style="top:118px">81</div>
<div class="cl" style="top:118px">}</div>
<div class="ln" style="top:142px">82</div>
<div class="ln" style="top:166px;color:#a4a3a3">83</div>
<div class="cl" style="top:165px"><span class="k">func </span><span class="f">ExampleSet_IsSubsetOf</span>() <span class="br">{</span></div>
<div class="ln" style="top:190px">84</div>
<div class="ln" style="top:214px">85</div>
<div class="ln" style="top:238px">86</div>
<div class="ln" style="top:262px">87</div>
<div class="ln" style="top:286px">88</div>
<div class="ln" style="top:310px">89</div>
<div class="ln" style="top:334px">90</div>
<div class="cl" style="top:334px">    <span class="c">// Output:</span></div>
<div class="ln" style="top:358px">91</div>
<div class="cl" style="top:358px">    <span class="c">// false</span></div>
<div class="ln" style="top:382px">92</div>
<div class="cl" style="top:382px">    <span class="c">// true</span></div>
<div class="ln" style="top:406px">93</div>
<div class="cl" style="top:406px"><span class="br">}</span></div>
<div class="ln" style="top:430px">94</div>
<div class="ln" style="top:454px">95</div>
<div class="cl" style="top:454px"><span class="k">func </span><span class="f">ExampleSet_AddIfNotExist</span>() {</div>
<div class="ln" style="top:478px">96</div>
<div class="cl" style="top:478px">    <span class="k">var </span>set <span class="p">gset</span>.<span class="ty">Set</span></div>
<div class="ln" style="top:502px">97</div>
<div class="cl" style="top:502px">    <span class="p">fmt</span>.<span class="m">Println</span>(set.<span class="m">AddIfNotExist</span>(<span class="n">1</span>))</div>
<div class="ln" style="top:526px">98</div>
<div class="cl" style="top:526px">    <span class="p">fmt</span>.<span class="m">Println</span>(set.<span class="m">AddIfNotExist</span>(<span class="n">1</span>))</div>
<div class="ln" style="top:550px">99</div>
<div class="cl" style="top:550px">    <span class="p">fmt</span>.<span class="m">Println</span>(set.<span class="m">Slice</span>())</div>
<div class="ln" style="top:574px">100</div>
<div class="ln" style="top:598px">101</div>
<div class="cl" style="top:598px">    <span class="c">// Output:</span></div>
<div class="ln" style="top:622px">102</div>
<div class="cl" style="top:622px">    <span class="c">// true</span></div>
<div class="ln" style="top:646px">103</div>
<div class="cl" style="top:646px">    <span class="c">// false</span></div>
<div class="ln" style="top:670px">104</div>
<div class="cl" style="top:670px">    <span class="c">// [1]</span></div>
<div class="ln" style="top:694px">105</div>
<div class="cl" style="top:694px">}</div>
<div class="abs" style="left:461px;top:57px;width:1px;height:660px;background:#555555"></div>
<div class="abs" style="left:451px;top:166px;width:1px;height:264px;background:#4f7f72"></div>
<svg class="abs" style="left:456px;top:99px" width="11" height="13" viewBox="0 0 11 13"><path d="M0.5 12.5 V4.8 L5.5 0.5 L10.5 4.8 V12.5 Z" fill="#2b2b2b" stroke="#606366"/><path d="M3 7.5 H8" stroke="#606366"/></svg>
<svg class="abs" style="left:456px;top:123px" width="11" height="13" viewBox="0 0 11 13"><path d="M0.5 12.5 V4.8 L5.5 0.5 L10.5 4.8 V12.5 Z" fill="#2b2b2b" stroke="#606366"/><path d="M3 7.5 H8" stroke="#606366"/></svg>
<svg class="abs" style="left:456px;top:387px" width="11" height="13" viewBox="0 0 11 13"><path d="M0.5 12.5 V4.8 L5.5 0.5 L10.5 4.8 V12.5 Z" fill="#2b2b2b" stroke="#606366"/><path d="M3 7.5 H8" stroke="#606366"/></svg>
<svg class="abs" style="left:456px;top:411px" width="11" height="13" viewBox="0 0 11 13"><path d="M0.5 12.5 V4.8 L5.5 0.5 L10.5 4.8 V12.5 Z" fill="#2b2b2b" stroke="#606366"/><path d="M3 7.5 H8" stroke="#606366"/></svg>
<svg class="abs" style="left:456px;top:675px" width="11" height="13" viewBox="0 0 11 13"><path d="M0.5 12.5 V4.8 L5.5 0.5 L10.5 4.8 V12.5 Z" fill="#2b2b2b" stroke="#606366"/><path d="M3 7.5 H8" stroke="#606366"/></svg>
<svg class="abs" style="left:456px;top:699px" width="11" height="13" viewBox="0 0 11 13"><path d="M0.5 12.5 V4.8 L5.5 0.5 L10.5 4.8 V12.5 Z" fill="#2b2b2b" stroke="#606366"/><path d="M3 7.5 H8" stroke="#606366"/></svg>
<svg class="abs" style="left:456px;top:173px" width="11" height="13" viewBox="0 0 11 13"><path d="M0.5 0.5 V8.2 L5.5 12.5 L10.5 8.2 V0.5 Z" fill="#2b2b2b" stroke="#606366"/><path d="M3 5.5 H8" stroke="#606366"/></svg>
<svg class="abs" style="left:456px;top:341px" width="11" height="13" viewBox="0 0 11 13"><path d="M0.5 0.5 V8.2 L5.5 12.5 L10.5 8.2 V0.5 Z" fill="#2b2b2b" stroke="#606366"/><path d="M3 5.5 H8" stroke="#606366"/></svg>
<svg class="abs" style="left:456px;top:461px" width="11" height="13" viewBox="0 0 11 13"><path d="M0.5 0.5 V8.2 L5.5 12.5 L10.5 8.2 V0.5 Z" fill="#2b2b2b" stroke="#606366"/><path d="M3 5.5 H8" stroke="#606366"/></svg>
<svg class="abs" style="left:456px;top:605px" width="11" height="13" viewBox="0 0 11 13"><path d="M0.5 0.5 V8.2 L5.5 12.5 L10.5 8.2 V0.5 Z" fill="#2b2b2b" stroke="#606366"/><path d="M3 5.5 H8" stroke="#606366"/></svg>
<svg class="abs" style="left:431.6px;top:171.3px" width="9" height="12" viewBox="0 0 9 12"><path d="M0 0 L9 6 L0 12 Z" fill="#499c54"/></svg>
<svg class="abs" style="left:431.6px;top:459.3px" width="9" height="12" viewBox="0 0 9 12"><path d="M0 0 L9 6 L0 12 Z" fill="#499c54"/></svg>
</div></div>
<div id="popup" class="abs">
<div class="mi s" style="top:0px">
<svg class="abs" style="left:7px;top:4px" width="10" height="12" viewBox="0 0 10 12"><path d="M0 0 L10 6 L0 12 Z" fill="#499c54"/></svg>
<div class="t" style="font-size:13px">R<u>u</u>n '<span style="letter-spacing:-0.3px">ExampleSet<span class="us">_</span>IsSubsetO...'</span></div>
<div class="t" style="left:252px;font-size:13px">Ctrl+Shift+F10</div>
</div>
<div class="mi" style="top:21px">
<svg class="abs" style="left:4px;top:3px" width="15" height="15" viewBox="0 0 15 15"><g stroke="#499c54" stroke-width="1.5" fill="none"><path d="M3.9 0.2 L5.9 2.8 M10.1 0.2 L8.1 2.8 M0.9 4.9 H13.1 M0.9 8.3 H13.1 M0.9 11.6 H13.1"/></g><path d="M3.3 6.2 C3.3 1.6 10.7 1.6 10.7 6.2 V10.4 C10.7 15.3 3.3 15.3 3.3 10.4 Z" fill="#499c54"/><path d="M5.2 6.6 H8.8 M5.2 9.7 H8.8" stroke="#3c3f41" stroke-width="1"/></svg>
<div class="t" style="font-size:13px"><span style="letter-spacing:0.3px"><u>D</u>ebug '</span><span style="letter-spacing:-0.3px">ExampleSet<span class="us">_</span>IsSubsetO...'</span></div>
</div>
<div class="mi" style="top:42px">
<svg class="abs" style="left:3px;top:3px" width="17" height="16" viewBox="0 0 17 16"><path d="M0.8 1.6 H11.4 V7.5 C11.4 10.8 6.1 13.2 6.1 13.2 C6.1 13.2 0.8 10.8 0.8 7.5 Z" fill="#afb1b3"/><path d="M6.4 3.5 H10.3 V7.5 C10.3 9.6 6.4 11.7 6.4 11.7 Z" fill="#3c3f41"/><path d="M8.9 5.8 L16 10.3 L8.9 14.8 Z" fill="#499c54" stroke="#3c3f41" stroke-width="1.4" paint-order="stroke"/></svg>
<div class="t" style="font-size:13px">Run '<span style="letter-spacing:-0.3px">ExampleSet<span class="us">_</span>IsSubsetO...'</span> with Co<u>v</u>erage</div>
</div>
<div class="mi" style="top:63px">
<svg class="abs" style="left:3px;top:3px" width="17" height="16" viewBox="0 0 17 16"><circle cx="7.05" cy="6.6" r="5.3" fill="none" stroke="#afb1b3" stroke-width="1.5"/><path d="M7.7 3.9 L7 6.9 L5.3 8.8" fill="none" stroke="#afb1b3" stroke-width="1.3"/><path d="M8.9 6 L16 10.5 L8.9 15 Z" fill="#499c54" stroke="#3c3f41" stroke-width="1.4" paint-order="stroke"/></svg>
<div class="t" style="font-size:13px">Run '<span style="letter-spacing:-0.3px">ExampleSet<span class="us">_</span>IsSubsetO...'</span> with 'CPU Profiler'</div>
</div>
<div class="mi" style="top:84px">
<svg class="abs" style="left:3px;top:3px" width="17" height="16" viewBox="0 0 17 16"><circle cx="7.05" cy="6.6" r="5.3" fill="none" stroke="#afb1b3" stroke-width="1.5"/><path d="M7.7 3.9 L7 6.9 L5.3 8.8" fill="none" stroke="#afb1b3" stroke-width="1.3"/><path d="M8.9 6 L16 10.5 L8.9 15 Z" fill="#499c54" stroke="#3c3f41" stroke-width="1.4" paint-order="stroke"/></svg>
<div class="t" style="font-size:13px">Run '<span style="letter-spacing:-0.3px">ExampleSet<span class="us">_</span>IsSubsetO...'</span><span style="letter-spacing:0.23px"> with 'Memory Profiler'</span></div>
</div>
<div class="mi" style="top:105px">
<svg class="abs" style="left:3px;top:3px" width="17" height="16" viewBox="0 0 17 16"><circle cx="7.05" cy="6.6" r="5.3" fill="none" stroke="#afb1b3" stroke-width="1.5"/><path d="M7.7 3.9 L7 6.9 L5.3 8.8" fill="none" stroke="#afb1b3" stroke-width="1.3"/><path d="M8.9 6 L16 10.5 L8.9 15 Z" fill="#499c54" stroke="#3c3f41" stroke-width="1.4" paint-order="stroke"/></svg>
<div class="t" style="font-size:13px">Run '<span style="letter-spacing:-0.3px">ExampleSet<span class="us">_</span>IsSubsetO...'</span><span style="letter-spacing:0.17px"> with 'Blocking Profiler'</span></div>
</div>
<div class="mi" style="top:126px">
<svg class="abs" style="left:3px;top:3px" width="17" height="16" viewBox="0 0 17 16"><circle cx="7.05" cy="6.6" r="5.3" fill="none" stroke="#afb1b3" stroke-width="1.5"/><path d="M7.7 3.9 L7 6.9 L5.3 8.8" fill="none" stroke="#afb1b3" stroke-width="1.3"/><path d="M8.9 6 L16 10.5 L8.9 15 Z" fill="#499c54" stroke="#3c3f41" stroke-width="1.4" paint-order="stroke"/></svg>
<div class="t" style="font-size:13px">Run '<span style="letter-spacing:-0.3px">ExampleSet<span class="us">_</span>IsSubsetO...'</span><span style="letter-spacing:0.16px"> with 'Mutex Profiler'</span></div>
</div>
<div class="mi" style="top:147px">
<div class="t" style="font-size:13px"><span style="letter-spacing:0.07px">Modify Run Configuration...</span></div>
</div>
</div>
</body></html>
